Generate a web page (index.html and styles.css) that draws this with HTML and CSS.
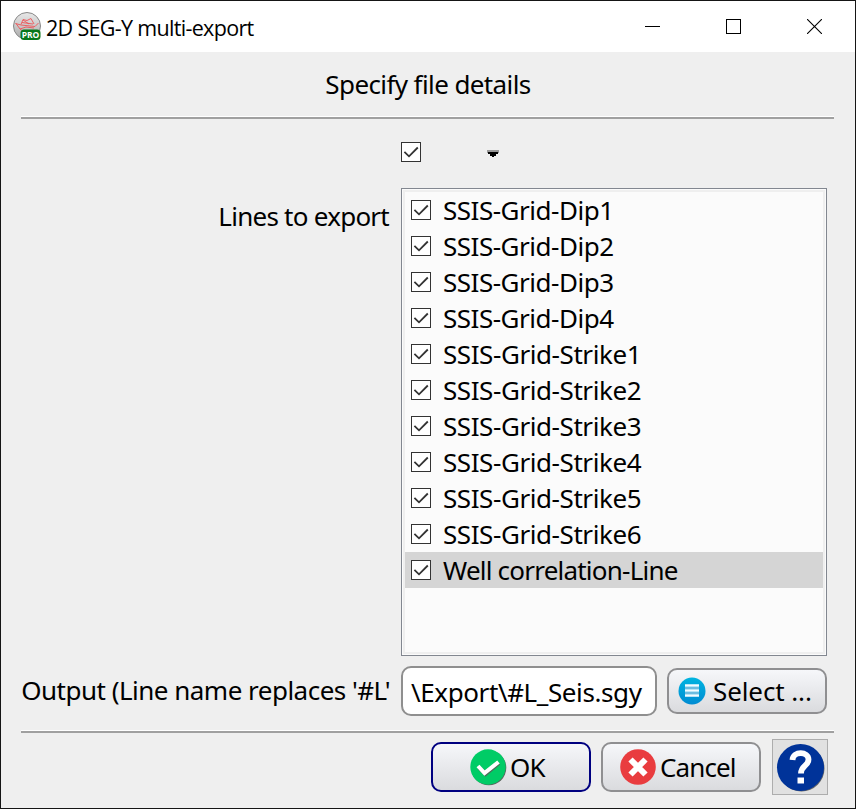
FILE: index.html
```html
<!DOCTYPE html>
<html lang="en">
<head>
<meta charset="utf-8">
<title>2D SEG-Y multi-export</title>
<link rel="stylesheet" href="styles.css">
</head>
<body>
<svg class="defs" width="0" height="0">
  <symbol id="check" viewBox="0 0 20 20"><rect x=".5" y=".5" width="19" height="19" fill="#fff" stroke="#333"/><path d="M3.400 9.800 8 14.300 16.800 5.500" fill="none" stroke="#333" stroke-width="1.800"/></symbol>
</svg>
<div class="window">
  <header class="titlebar">
    <svg class="logo" viewBox="0 0 30 30">
      <defs><linearGradient id="metal" x1="0" y1="0" x2="0" y2="1"><stop offset="0" stop-color="#e8e8e8"/><stop offset="1" stop-color="#aaa"/></linearGradient></defs>
      <circle cx="15" cy="14" r="13.500" fill="url(#metal)" stroke="#888"/>
      <path d="M3.500 11.500 9 13 23 14.500 26.500 11M9 12.500 11 7.500 15 8.500 19 6.500 22 12M10 10.500 21 12M4 11.500 8 17 14 15 22 16M8 17 12 20 17 21M11 8 17 12" fill="none" stroke="#ee5457" stroke-width=".9"/>
      <rect x="8.500" y="17.500" width="20" height="10.500" rx="3.500" fill="#08771c"/>
      <text x="18.500" y="25.800" text-anchor="middle" class="pro">PRO</text>
    </svg>
    <span class="title">2D SEG-Y multi-export</span>
    <div class="controls">
      <svg viewBox="0 0 15 15"><path d="M0 7.500H15" stroke="#000"/></svg>
      <svg viewBox="0 0 15 15"><rect x=".5" y=".5" width="14" height="14" fill="none" stroke="#000"/></svg>
      <svg viewBox="0 0 15 15"><path d="M0 0 15 15M15 0 0 15" stroke="#000" stroke-width="1.100"/></svg>
    </div>
  </header>
  <h1 class="heading"><span>Specify file details</span></h1>
  <div class="rule"></div>
  <main class="form">
    <div class="all">
      <svg class="box"><use href="#check"/></svg>
      <svg class="arrow" viewBox="0 0 14 8"><path d="M1 0H13V3H1Z" fill="#999"/><path d="M2 2H12V4H10V6H8V7H6V6H4V4H2Z" fill="#000"/></svg>
    </div>
    <label class="label lines"><span>Lines to export</span></label>
    <ul class="list">
      <li><svg class="box"><use href="#check"/></svg><span class="dip">SSIS-Grid-Dip1</span></li>
      <li><svg class="box"><use href="#check"/></svg><span class="dip">SSIS-Grid-Dip2</span></li>
      <li><svg class="box"><use href="#check"/></svg><span class="dip">SSIS-Grid-Dip3</span></li>
      <li><svg class="box"><use href="#check"/></svg><span class="dip">SSIS-Grid-Dip4</span></li>
      <li><svg class="box"><use href="#check"/></svg><span class="strike">SSIS-Grid-Strike1</span></li>
      <li><svg class="box"><use href="#check"/></svg><span class="strike">SSIS-Grid-Strike2</span></li>
      <li><svg class="box"><use href="#check"/></svg><span class="strike">SSIS-Grid-Strike3</span></li>
      <li><svg class="box"><use href="#check"/></svg><span class="strike">SSIS-Grid-Strike4</span></li>
      <li><svg class="box"><use href="#check"/></svg><span class="strike">SSIS-Grid-Strike5</span></li>
      <li><svg class="box"><use href="#check"/></svg><span class="strike">SSIS-Grid-Strike6</span></li>
      <li class="selected"><svg class="box"><use href="#check"/></svg><span class="well">Well correlation-Line</span></li>
    </ul>
    <label class="label output"><span>Output (Line name replaces '#L'</span></label>
    <div class="file">
      <div class="field"><span>\Export\#L_Seis.sgy</span></div>
      <button class="btn select">
        <svg viewBox="0 0 28 28"><defs><linearGradient id="cyan" x1="0" y1="0" x2="0" y2="1"><stop offset="0" stop-color="#00b4e0"/><stop offset="1" stop-color="#008bd2"/></linearGradient></defs><circle cx="14" cy="14" r="13.500" fill="url(#cyan)"/><path d="M7 8.500H21M7 13.500H21M7 18.500H21" stroke="#f4fbff" stroke-width="2.400"/><path d="M7 11H21M7 16H21" stroke="#6cbce0" stroke-width="2"/></svg>
        <span>Select ...</span>
      </button>
    </div>
  </main>
  <div class="rule"></div>
  <footer class="actions">
    <button class="btn ok">
      <svg viewBox="0 0 38 38"><circle cx="19.800" cy="19.800" r="17.500" fill="#59655e"/><circle cx="19" cy="19" r="17.700" fill="#0c6"/><path d="M10 19.500 16.500 26 30 15" fill="none" stroke="#4c6d59" stroke-width="4"/><path d="M9 18 15.500 25 29.500 14" fill="none" stroke="#fff" stroke-width="4"/></svg>
      <span>OK</span>
    </button>
    <button class="btn cancel">
      <svg viewBox="0 0 38 38"><circle cx="19" cy="19" r="17.800" fill="#e93c3f"/><path d="M11.500 11.500 26.500 26.500M26.500 11.500 11.500 26.500" stroke="#fff" stroke-width="6"/></svg>
      <span>Cancel</span>
    </button>
    <button class="help">
      <svg viewBox="0 0 50 50"><circle cx="26.500" cy="26.500" r="23" fill="#666"/><circle cx="25.500" cy="25.500" r="23.500" fill="#039"/><path d="M17.500 18C18 9 33.500 9 33.500 17.500 33.500 24 26 23.500 26 31.500" fill="none" stroke="#fff" stroke-width="5.800"/><path d="M22.500 35.500h6.500v6h-6.500z" fill="#fff"/></svg>
    </button>
  </footer>
</div>
</body>
</html>
```
FILE: styles.css
```css
* { box-sizing: border-box; }
body { margin: 0; font: 26px/36px "Noto Sans", "Liberation Sans", sans-serif; color: #000; }
svg { display: block; flex: none; }
span { white-space: nowrap; }
.defs { position: absolute; }
.window { width: 856px; height: 809px; border: 1px solid #151515; background: #efefef; display: flex; flex-direction: column; }
.titlebar { height: 51px; background: #fff; display: flex; align-items: center; padding: 0 33px 0 11px; }
.logo { width: 30px; height: 30px; }
.pro { font: bold 8.500px "Open Sans", sans-serif; fill: #fff; }
.title { font: 21.500px/30px "Open Sans", sans-serif; margin-left: 4px; padding-top: 2px; letter-spacing: -.68px; }
.controls { display: flex; gap: 66px; margin-left: auto; }
.controls svg { width: 15px; height: 15px; }
.heading { height: 64px; margin: 0; font-size: 26px; font-weight: 400; text-align: center; line-height: 64px; letter-spacing: -.6px; }
.rule { height: 3px; margin: 0 21px 0 20px; border-top: 1px solid #fff; background: #a0a0a0; flex: none; }
.form { display: grid; grid-template-columns: 369px 426px; grid-template-rows: 69px 468px 74px; column-gap: 11px; padding-left: 20px; }
.all { grid-column: 2; display: flex; padding-top: 23px; }
.box { width: 20px; height: 20px; }
.arrow { width: 14px; height: 8px; margin: 8px 0 0 65px; }
.label { display: flex; justify-content: flex-end; }
.lines { padding: 10px 1px 0 0; letter-spacing: -.75px; }
.list { margin: 0; list-style: none; border: 1px solid #828790; background: #fbfbfb; box-shadow: inset 0 0 0 1px #fbfbfb, inset 0 0 0 3px #efefef; padding: 3px; }
.list li { height: 36px; display: flex; align-items: center; padding-left: 6px; gap: 12px; }
.dip { letter-spacing: -.48px; }
.strike { letter-spacing: -.42px; }
.well { letter-spacing: -.78px; }
.selected { background: #d5d5d5; }
.output { padding-top: 16px; letter-spacing: -.51px; }
.file { display: flex; gap: 10px; padding-top: 10px; }
.field { width: 256px; height: 50px; border: 2px solid #8f8f8f; border-radius: 10px; background: #fff; padding: 6px 8px; letter-spacing: -.4px; }
.btn { width: 160px; height: 50px; border: 2px solid #8f8f91; border-radius: 10px; background: linear-gradient(#f6f7fa, #dadbde); font: inherit; color: #000; display: flex; align-items: center; padding: 0; gap: 3px; }
.select { height: 46px; margin-top: 2px; gap: 7px; padding-left: 9px; letter-spacing: -.1px; }
.select svg { width: 28px; height: 28px; }
.actions { display: flex; justify-content: flex-end; gap: 10px; padding: 9px 27px 0 0; }
.ok { border-color: navy; padding-left: 36px; letter-spacing: -.9px; }
.cancel { padding-left: 16px; letter-spacing: -.9px; }
.ok svg, .cancel svg { width: 38px; height: 38px; }
.help { width: 56px; height: 56px; margin: -3px 0 0 1px; border: 1px solid #adadad; background: #e1e1e1; padding: 2px; }
.help svg { width: 50px; height: 50px; }
```
